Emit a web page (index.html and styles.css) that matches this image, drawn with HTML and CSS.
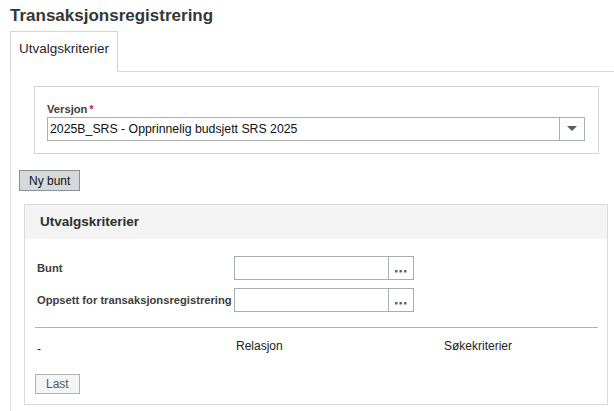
FILE: index.html
```html
<!DOCTYPE html>
<html lang="no">
<head>
  <meta charset="UTF-8">
  <meta name="viewport" content="width=device-width, initial-scale=1.0">
  <title>Transaksjonsregistrering</title>
  <link rel="stylesheet" href="styles.css">
</head>
<body>
  <h1 class="pageTitle">Transaksjonsregistrering</h1>

  <div class="tabStrip">
    <div class="tab">Utvalgskriterier</div>
  </div>

  <div class="tabPanel">
    <div class="versionBox">
      <label class="fieldLabel">Versjon<span class="required">*</span></label>
      <div class="selectBox">
        <span class="selectText">2025B_SRS - Opprinnelig budsjett SRS 2025</span>
        <span class="selectButton">
          <svg width="10" height="6" viewBox="0 0 10 6"><path d="M0 0h10L5 5z" fill="#555b60"/></svg>
        </span>
      </div>
    </div>

    <button class="button">Ny bunt</button>

    <div class="criteriaPanel">
      <div class="criteriaHeader">Utvalgskriterier</div>
      <div class="criteriaBody">
        <div class="formRow">
          <span class="fieldLabel">Bunt</span>
          <div class="lookupBox">
            <span class="lookupInput"></span>
            <span class="lookupButton">
              <svg width="12" height="3" viewBox="0 0 12 3"><rect x="0" y="0" width="2.5" height="2.5" fill="#666"/><rect x="4.5" y="0" width="2.5" height="2.5" fill="#666"/><rect x="9" y="0" width="2.5" height="2.5" fill="#666"/></svg>
            </span>
          </div>
        </div>
        <div class="formRow">
          <span class="fieldLabel">Oppsett for transaksjonsregistrering</span>
          <div class="lookupBox">
            <span class="lookupInput"></span>
            <span class="lookupButton">
              <svg width="12" height="3" viewBox="0 0 12 3"><rect x="0" y="0" width="2.5" height="2.5" fill="#666"/><rect x="4.5" y="0" width="2.5" height="2.5" fill="#666"/><rect x="9" y="0" width="2.5" height="2.5" fill="#666"/></svg>
            </span>
          </div>
        </div>

        <div class="separator"></div>

        <div class="criteriaTable">
          <span class="colDash">-</span>
          <span class="colRel">Relasjon</span>
          <span class="colSearch">Søkekriterier</span>
        </div>

        <button class="button light">Last</button>
      </div>
    </div>
  </div>
</body>
</html>
```

FILE: styles.css
```css
* {
  box-sizing: border-box;
}

body {
  margin: 0;
  padding: 6px 0 0 10px;
  font-family: 'Liberation Sans', Arial, sans-serif;
  color: #333;
  background: white;
  overflow: hidden;
}

.pageTitle {
  margin: 0 0 5px 0;
  font-size: 17px;
  line-height: 20px;
  font-weight: bold;
  color: #363636;
}

/* Tab strip with one active tab */
.tabStrip {
  display: flex;
  border-bottom: 1px solid #d8d8d8;
  height: 41px;
}

.tab {
  width: 108px;
  height: 41px;
  padding: 9px 0 0 8px;
  border: 1px solid #d4d4d4;
  border-bottom: none;
  background: white;
  font-size: 13.5px;
  line-height: 16px;
  color: #2a2233;
  margin-bottom: -1px;
}

.tabPanel {
  border-left: 1px solid #e2e2e2;
  padding: 14px 6px 0 8px;
  height: 340px;
}

.versionBox {
  margin: 0 9px 0 15px;
  border: 1px solid #d6d6d6;
  padding: 15px 13px 12px 12px;
}

.fieldLabel {
  display: block;
  font-size: 11.2px;
  font-weight: bold;
  color: #3d3d3d;
  line-height: 14px;
}

.required {
  color: #b0202a;
  margin-left: 2px;
  font-size: 10px;
}

.selectBox {
  display: flex;
  height: 24px;
  border: 1px solid #a7adb0;
}

.selectText {
  flex: 1;
  padding-left: 2px;
  font-size: 12.3px;
  line-height: 22px;
  color: #111;
}

.selectButton {
  width: 25px;
  border-left: 1px solid #a7adb0;
  display: flex;
  align-items: center;
  justify-content: center;
}

.button {
  display: block;
  margin-top: 16px;
  height: 21px;
  padding: 0 9px;
  font-family: 'Liberation Sans', Arial, sans-serif;
  font-size: 12px;
  color: #111;
  background: #d6d9dc;
  border: 1px solid #8c9194;
  border-radius: 0;
}

.button.light {
  margin-top: 0;
  height: 20px;
  padding: 0 10px;
  color: #555;
  background: #f4f5f5;
  border-color: #aeb3b6;
}

.criteriaPanel {
  margin: 13px 0 0 5px;
  border: 1px solid #dadada;
}

.criteriaHeader {
  height: 34px;
  background: #f3f4f3;
  padding-left: 15px;
  font-size: 13.5px;
  font-weight: bold;
  line-height: 34px;
  color: #2e2e2e;
}

.criteriaBody {
  padding: 17px 9px 10px 10px;
}

.formRow {
  display: flex;
  align-items: center;
  margin-bottom: 8px;
}

.formRow .fieldLabel {
  width: 199px;
  padding-left: 2px;
}

.lookupBox {
  display: flex;
  width: 180px;
  height: 24px;
  border: 1px solid #a7adb0;
}

.lookupInput {
  flex: 1;
}

.lookupButton {
  width: 25px;
  border-left: 1px solid #a7adb0;
  display: flex;
  align-items: flex-end;
  justify-content: center;
  padding-bottom: 6px;
}

.separator {
  border-top: 1px solid #aeb3b5;
  margin-top: 15px;
}

.criteriaTable {
  display: flex;
  height: 46px;
  padding-top: 11px;
  font-size: 12px;
  color: #222;
}

.colDash {
  width: 201px;
  padding: 3px 0 0 2px;
}

.colRel {
  width: 208px;
}
```
